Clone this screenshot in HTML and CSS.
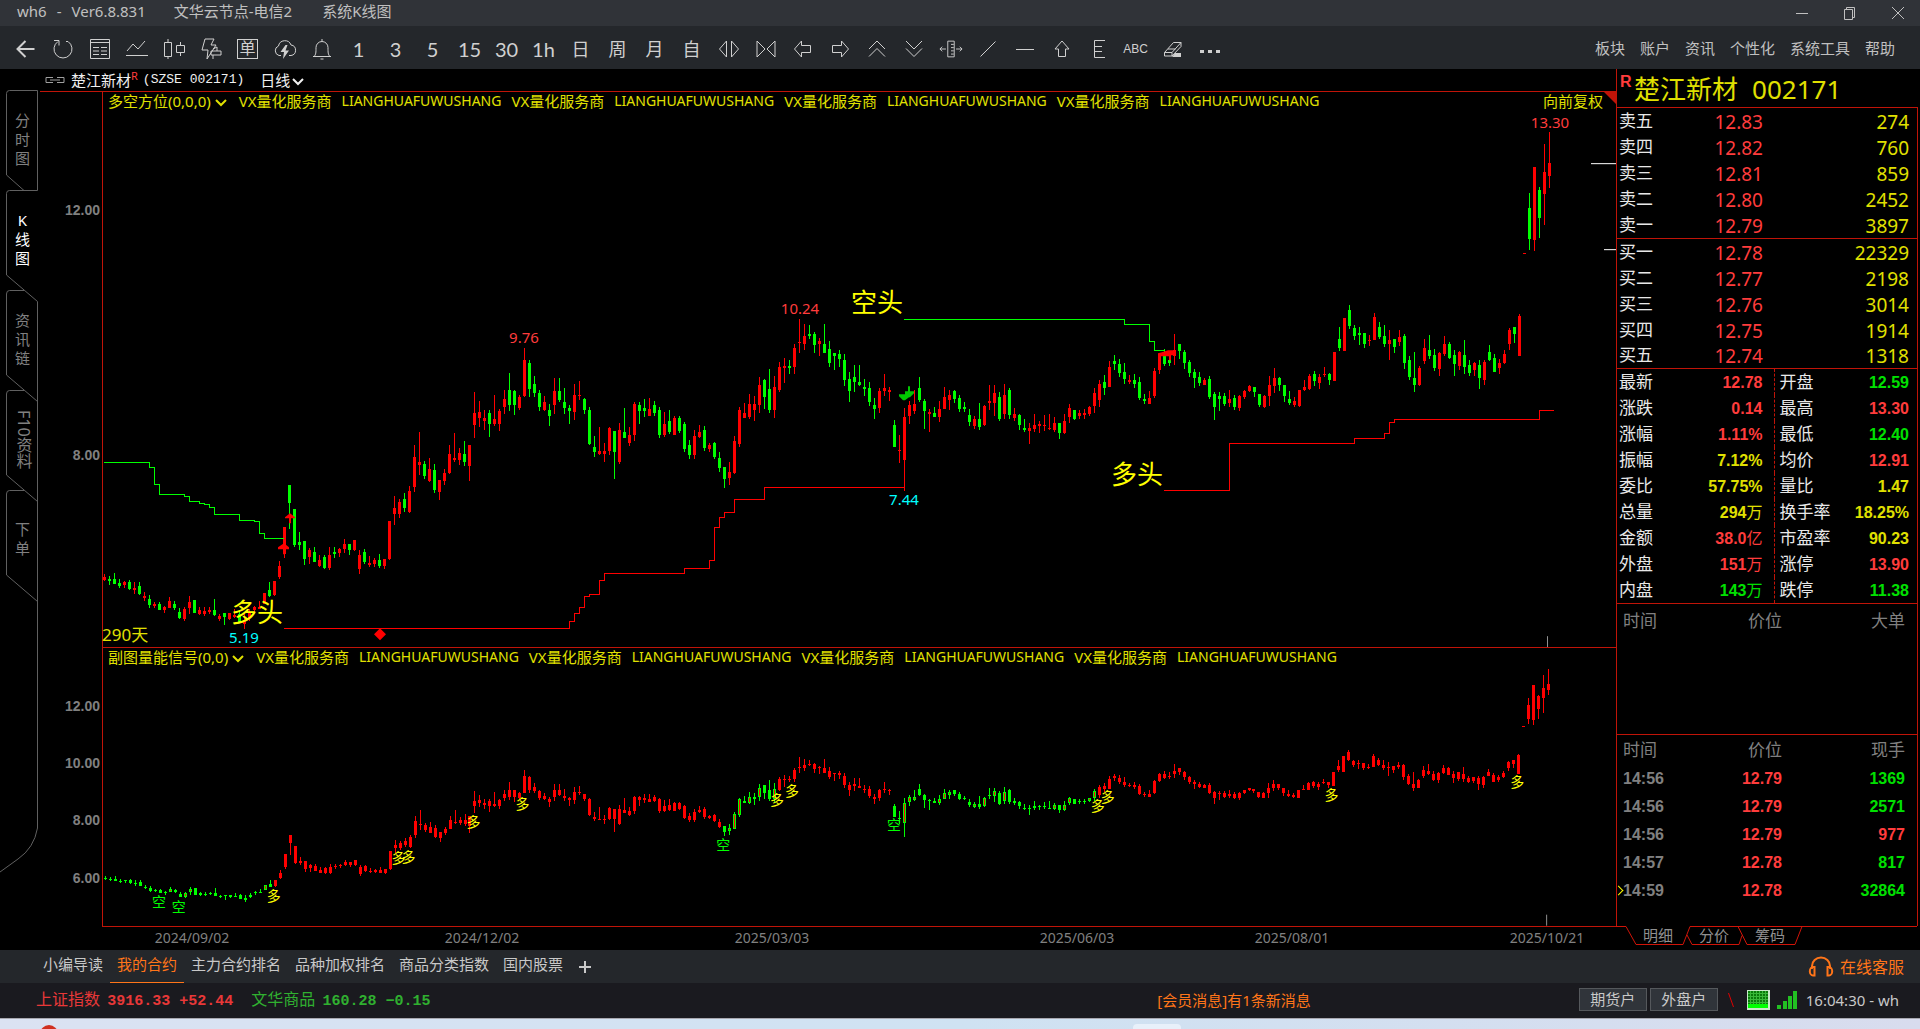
FILE: index.html
```html
<!DOCTYPE html>
<html lang="zh-CN">
<head>
  <meta charset="UTF-8">
  <meta name="viewport" content="width=device-width, initial-scale=1.0">
  <title>系统K线图</title>
  <link rel="stylesheet" href="styles.css">
</head>
<body>
  <header class="titlebar">
    <span>wh6</span>
    <span>-</span>
    <span>Ver6.8.831</span>
    <span class="node">文华云节点-电信2</span>
    <span>系统K线图</span>
    <div class="window-buttons">
      <button aria-label="最小化"><svg viewBox="0 0 14 14"><path d="M1 7.500h12"/></svg></button>
      <button aria-label="还原"><svg viewBox="0 0 14 14"><path d="M1.500 3.500h8v10h-8zM3.500 3.500v-2h8v10h-2"/></svg></button>
      <button aria-label="关闭"><svg viewBox="0 0 14 14"><path d="M1 1l12 12M13 1L1 13"/></svg></button>
    </div>
  </header>

  <nav class="toolbar">
    <button aria-label="返回"><svg viewBox="0 0 24 24"><path class="thick" d="M20.500 12H4M11.500 4L3.500 12l8 8"/></svg></button>
    <button aria-label="刷新"><svg viewBox="0 0 24 24"><path d="M7 4.500A9 9 0 1 0 17 4.500M3 3.500h5v5M17 4.500h-2"/></svg></button>
    <button aria-label="报价"><svg viewBox="0 0 24 24"><path d="M2.500 2.500h19v19h-19zM2.500 5.500h19M5 10.500h6M13 10.500h6M5 14h6M13 14h6M5 17.500h6M13 17.500h6"/></svg></button>
    <button aria-label="分时"><svg viewBox="0 0 24 24"><path d="M2 14l6-7 5 5 7-8M1 18.500h22"/></svg></button>
    <button aria-label="K线"><svg viewBox="0 0 24 24"><path d="M2.500 5.500h7v14h-7zM6 2v3.500M6 19.500V22M14.500 8.500h8v7h-8zM18.500 5v3.500M18.500 15.500V19"/></svg></button>
    <button aria-label="闪电下单"><svg viewBox="0 0 24 24"><path d="M6 2h9l-3 6h5L8 22l1-9H3zM12 14h10v4H12zM14 12l4-2v4M14 22v-4"/></svg></button>
    <button aria-label="下单" class="boxed"><span>单</span></button>
    <button aria-label="云端"><svg viewBox="0 0 24 24"><path d="M8 18.500H6a5 5 0 0 1-.5-9.500 6.500 6.500 0 0 1 12.500-1 5.300 5.300 0 0 1 0 10.500h-2"/><path class="solid" d="M12.500 8l-5 7h3.500l-1 7 6-8.500h-3.500l2-5.500z"/></svg></button>
    <button aria-label="预警"><svg viewBox="0 0 24 24"><path d="M4 19.500c2-2 2-4 2-9a6 6 0 0 1 12 0c0 5 0 7 2 9M3 19.500h18M12 2v2.500M10.500 22h3"/></svg></button>
    <button class="num">1</button>
    <button class="num">3</button>
    <button class="num">5</button>
    <button class="num">15</button>
    <button class="num">30</button>
    <button class="num">1h</button>
    <button class="period">日</button>
    <button class="period">周</button>
    <button class="period">月</button>
    <button class="period">自</button>
    <button aria-label="放宽"><svg viewBox="0 0 24 24"><path d="M9.500 4v16L2.500 12zM14.500 4v16l7-8z"/></svg></button>
    <button aria-label="收窄"><svg viewBox="0 0 24 24"><path d="M3 4v16l8-8zM21 4v16l-8-8z"/></svg></button>
    <button aria-label="左移"><svg viewBox="0 0 24 24"><path d="M10.500 4L3.500 12l7 8v-4.500h9v-7h-9z"/></svg></button>
    <button aria-label="右移"><svg viewBox="0 0 24 24"><path d="M13.500 4l7 8-7 8v-4.500h-9v-7h9z"/></svg></button>
    <button aria-label="上翻"><svg viewBox="0 0 24 24"><path d="M4 12l8-8 8 8M4 19.500l8-8 8 8"/></svg></button>
    <button aria-label="下翻"><svg viewBox="0 0 24 24"><path d="M4 4l8 8 8-8M4 11.500l8 8 8-8"/></svg></button>
    <button aria-label="刻度"><svg viewBox="0 0 26 24"><path d="M9.500 3.500h7v17h-7zM13 7h3M13 10.500h3M13 14h3M13 17.500h3M7.500 12H1M3.500 9.500L1 12l2.500 2.500M18.500 12H25M22.500 9.500L25 12l-2.500 2.500"/></svg></button>
    <button aria-label="斜线"><svg viewBox="0 0 24 24"><path d="M4.500 19.500L19.500 4.500"/></svg></button>
    <button aria-label="水平线"><svg viewBox="0 0 24 24"><path d="M3 12.500h18"/></svg></button>
    <button aria-label="箭头"><svg viewBox="0 0 24 24"><path d="M12 4l7 8h-3.500v7.500h-7V12H5z"/></svg></button>
    <button aria-label="黄金分割"><svg viewBox="0 0 24 24"><path d="M18 3.500H7.500v17H18M7.500 9.500H15M7.500 14.500H15"/></svg></button>
    <button class="abc">ABC</button>
    <button aria-label="擦除"><svg viewBox="0 0 24 24"><path d="M3.500 15.500l9-10h7.500l-9 10zM3.500 15.500v3.500h7.500v-3.500M11 19l9-9.500v-4M7 12h7.500"/><path class="solid" d="M14 16h6v4h-9z"/></svg></button>
    <button aria-label="更多"><svg viewBox="0 0 24 24"><path class="solid" d="M2 13h4v3H2zM10 13h4v3h-4zM18 13h4v3h-4z"/></svg></button>
    <div class="menu">
      <a href="#">板块</a>
      <a href="#">账户</a>
      <a href="#">资讯</a>
      <a href="#">个性化</a>
      <a href="#">系统工具</a>
      <a href="#">帮助</a>
    </div>
  </nav>

  <main class="workspace">
    <nav class="side">
      <svg class="side-lines" width="40" height="810" viewBox="0 69 40 810">
        <path d="M37.500 190.500V90.500H9.500Q6.500 90.500 6.500 93.500V175L24 190.500"/>
        <path d="M37.500 190.500H9.500Q6.500 190.500 6.500 193.500V275L37.500 301.500"/>
        <path d="M24 290.500H9.500Q6.500 290.500 6.500 294V375L37.500 401.500"/>
        <path d="M24 390.500H9.500Q6.500 390.500 6.500 394V475L37.500 501.500"/>
        <path d="M24 490.500H9.500Q6.500 490.500 6.500 494V575L37.500 601.500"/>
        <path d="M37.500 301.500V828Q34 848 18 859L0 872"/>
      </svg>
      <button><span>分时图</span></button>
      <button class="active"><span>K线图</span></button>
      <button><span>资讯链</span></button>
      <button><span class="turned">F10资料</span></button>
      <button><span>下单</span></button>
    </nav>

    <section class="charts">
      <div class="stock-bar">
        <svg width="20" height="8" viewBox="0 0 20 8"><path d="M8 1.500H1v5h7M12 1.500h7v5h-7M5 4h10"/></svg>
        <span class="name">楚江新材<sup>R</sup></span>
        <span class="code">(SZSE 002171)</span>
        <button class="cycle">日线<svg width="12" height="8" viewBox="0 0 12 8"><path d="M1 1l5 5 5-5"/></svg></button>
      </div>

      <div class="pane main-pane">
        <svg class="axis" viewBox="40 92 62 555">
          <text x="100" y="215">12.00</text>
          <text x="100" y="460">8.00</text>
        </svg>
        <div class="plot">
          <div class="plot-title">
            <button>多空方位(0,0,0)<svg width="12" height="8" viewBox="0 0 12 8"><path d="M1 1l5 5 5-5"/></svg></button>
            <span>VX量化服务商</span><span class="latin">LIANGHUAFUWUSHANG</span>
            <span>VX量化服务商</span><span class="latin">LIANGHUAFUWUSHANG</span>
            <span>VX量化服务商</span><span class="latin">LIANGHUAFUWUSHANG</span>
            <span>VX量化服务商</span><span class="latin">LIANGHUAFUWUSHANG</span>
            <a class="adjust" href="#">向前复权</a>
          </div>
          <svg class="graph" viewBox="103 112 1513 535">
            <g id="mainCandles" class="candles"></g>
            <g class="steps">
              <path class="short" d="M104 462H149V467H154V484H159V494H184V496H189V501H199V503H204V504H209V507H214V514H239V520H254V521H259V533H264V538H284"/>
              <path class="long" d="M284 628H569V621H574V613H579V607H584V596H589V594H599V580H604V573H684V568H709V560H714V527H719V517H724V512H734V499H764V487H904"/>
              <path class="short" d="M904 319H1124V324H1149V341H1154V350H1164"/>
              <path class="long" d="M1164 490H1229V443H1354V438H1384V433H1389V422H1394V419H1539V410H1554"/>
            </g>
            <path class="up-mark" d="M290 513l5 4v1h-4v5h-2v-5h-4v-1zM284 543l5 4v2h-4v5h-2v-5h-5v-2zM1162 352l6-2h8v5h-5v5h-2v-4h-11v-3zM380 628l6 6-6 6-6-6z"/>
            <path class="down-mark" d="M908 386h2v5h4v2l-4 4h-1l-4 3h-2l-4-4v-2h6v-3h3z"/>
            <g class="ticks">
              <path d="M1591 163.500h25M1604 249.500h12"/>
              <path class="dim" d="M1547.500 636v11"/>
            </g>
            <g class="prices">
              <text class="high" x="524" y="343">9.76</text>
              <text class="high" x="800" y="314">10.24</text>
              <text class="high" x="1550" y="128">13.30</text>
              <text class="low" x="244" y="643">5.19</text>
              <text class="low" x="904" y="505">7.44</text>
            </g>
            <g class="calls">
              <text x="231" y="622">多头</text>
              <text x="851" y="312">空头</text>
              <text x="1111" y="484">多头</text>
            </g>
            <text class="days" x="102" y="641">290天</text>
          </svg>
          <i class="corner"></i>
        </div>
      </div>

      <div class="pane sub-pane">
        <svg class="axis" viewBox="40 647 62 280">
          <text x="100" y="711">12.00</text>
          <text x="100" y="768">10.00</text>
          <text x="100" y="825">8.00</text>
          <text x="100" y="883">6.00</text>
        </svg>
        <div class="plot">
          <div class="plot-title">
            <button>副图量能信号(0,0)<svg width="12" height="8" viewBox="0 0 12 8"><path d="M1 1l5 5 5-5"/></svg></button>
            <span>VX量化服务商</span><span class="latin">LIANGHUAFUWUSHANG</span>
            <span>VX量化服务商</span><span class="latin">LIANGHUAFUWUSHANG</span>
            <span>VX量化服务商</span><span class="latin">LIANGHUAFUWUSHANG</span>
            <span>VX量化服务商</span><span class="latin">LIANGHUAFUWUSHANG</span>
          </div>
          <svg class="graph" viewBox="103 668 1513 258">
            <g id="subCandles" class="candles"></g>
            <g id="signals" class="signals"></g>
            <g class="ticks"><path class="dim" d="M1547.500 915v11"/></g>
          </svg>
        </div>
      </div>

      <svg class="dates" viewBox="40 927 1576 23">
        <text x="192" y="943">2024/09/02</text>
        <text x="482" y="943">2024/12/02</text>
        <text x="772" y="943">2025/03/03</text>
        <text x="1077" y="943">2025/06/03</text>
        <text x="1292" y="943">2025/08/01</text>
        <text x="1547" y="943">2025/10/21</text>
      </svg>
    </section>

    <aside class="quote">
      <h1><sup>R</sup><span>楚江新材</span><span>002171</span></h1>
      <div class="quote-body">
        <table class="orders">
          <tr><th>卖五</th><td>12.83</td><td>274</td></tr>
          <tr><th>卖四</th><td>12.82</td><td>760</td></tr>
          <tr><th>卖三</th><td>12.81</td><td>859</td></tr>
          <tr><th>卖二</th><td>12.80</td><td>2452</td></tr>
          <tr><th>卖一</th><td>12.79</td><td>3897</td></tr>
        </table>
        <table class="orders">
          <tr><th>买一</th><td>12.78</td><td>22329</td></tr>
          <tr><th>买二</th><td>12.77</td><td>2198</td></tr>
          <tr><th>买三</th><td>12.76</td><td>3014</td></tr>
          <tr><th>买四</th><td>12.75</td><td>1914</td></tr>
          <tr><th>买五</th><td>12.74</td><td>1318</td></tr>
        </table>
        <table class="stats">
          <tr><th>最新</th><td class="red">12.78</td><th>开盘</th><td class="green">12.59</td></tr>
          <tr><th>涨跌</th><td class="red">0.14</td><th>最高</th><td class="red">13.30</td></tr>
          <tr><th>涨幅</th><td class="red">1.11%</td><th>最低</th><td class="green">12.40</td></tr>
          <tr><th>振幅</th><td class="yellow">7.12%</td><th>均价</th><td class="red">12.91</td></tr>
          <tr><th>委比</th><td class="yellow">57.75%</td><th>量比</th><td class="yellow">1.47</td></tr>
          <tr><th>总量</th><td class="yellow">294<small>万</small></td><th>换手率</th><td class="yellow">18.25%</td></tr>
          <tr><th>金额</th><td class="red">38.0<small>亿</small></td><th>市盈率</th><td class="yellow">90.23</td></tr>
          <tr><th>外盘</th><td class="red">151<small>万</small></td><th>涨停</th><td class="red">13.90</td></tr>
          <tr><th>内盘</th><td class="green">143<small>万</small></td><th>跌停</th><td class="green">11.38</td></tr>
        </table>
        <div class="big-deals">
          <table class="deals">
            <tr><th>时间</th><th>价位</th><th>大单</th></tr>
          </table>
        </div>
        <div class="last-deals">
          <table class="deals">
            <tr><th>时间</th><th>价位</th><th>现手</th></tr>
            <tr><td>14:56</td><td class="red">12.79</td><td class="green">1369</td></tr>
            <tr><td>14:56</td><td class="red">12.79</td><td class="green">2571</td></tr>
            <tr><td>14:56</td><td class="red">12.79</td><td class="red">977</td></tr>
            <tr><td>14:57</td><td class="red">12.78</td><td class="green">817</td></tr>
            <tr class="current"><td>14:59</td><td class="red">12.78</td><td class="green">32864</td></tr>
          </table>
        </div>
      </div>
      <div class="quote-tabs">
        <svg width="302" height="20" viewBox="0 0 302 20">
          <path d="M0 .5H10L20 18.500H67L74 .5H301M71 9l5 9.500h47l3-9M122 .5l9 18h48l7-18"/>
        </svg>
        <button>明细</button>
        <button>分价</button>
        <button>筹码</button>
      </div>
    </aside>
  </main>

  <nav class="pages">
    <a href="#">小编导读</a>
    <a href="#" class="active">我的合约</a>
    <a href="#">主力合约排名</a>
    <a href="#">品种加权排名</a>
    <a href="#">商品分类指数</a>
    <a href="#">国内股票</a>
    <button aria-label="添加"><svg width="14" height="14" viewBox="0 0 14 14"><path d="M7 1v12M1 7h12"/></svg></button>
    <a href="#" class="service">
      <svg width="26" height="22" viewBox="0 0 26 22"><path d="M4 13V10a9 8.500 0 0 1 18 0v3M6.500 11v8.500H5a3 4 0 0 1 0-8.500zM19.500 11v8.500H21a3 4 0 0 0 0-8.500z"/></svg>
      在线客服
    </a>
  </nav>

  <footer class="status">
    <span class="index up">上证指数 <b>3916.33 +52.44</b></span>
    <span class="index down">文华商品 <b>160.28 −0.15</b></span>
    <a href="#" class="message">[会员消息]有1条新消息</a>
    <div class="status-right">
      <button>期货户</button>
      <button>外盘户</button>
      <svg class="slash" width="6" height="14" viewBox="0 0 6 14"><path d="M.5 0l5 14"/></svg>
      <svg class="meter" width="23" height="20" viewBox="0 0 23 20">
        <path fill="#c8e8c8" stroke="none" d="M0 0h23v20H0z"/>
        <path fill="#0a7a0a" stroke="none" d="M1 1h20v13H1z"/>
        <path stroke="#38b838" d="M1 3.500h20M1 6.500h20M1 9.500h20M1 12.500h20M3.500 1v13M6.500 1v13M9.500 1v13M12.500 1v13M15.500 1v13M18.500 1v13"/>
        <path fill="#00ff00" stroke="none" d="M1 14h20v4H1z"/>
      </svg>
      <svg class="signal" width="20" height="18" viewBox="0 0 20 18"><path fill="#22c022" d="M0 14h4v4H0zM5.500 10h4v8h-4zM11 5h4v13h-4zM16 0h4v18h-4z"/></svg>
      <span class="clock">16:04:30 - wh</span>
    </div>
  </footer>
  <div class="desktop"><i class="dot"></i><i class="pill"></i></div>

  <script src="chart.js"></script>
</body>
</html>
```
FILE: styles.css
```css
* {
  box-sizing: border-box;
}

body {
  margin: 0;
  height: 100vh;
  display: flex;
  flex-direction: column;
  overflow: hidden;
  background: #000;
  color: #c8c8c8;
  font-family: "Noto Sans", "Noto Sans CJK SC", sans-serif;
  font-size: 15px;
  line-height: 20px;
}

button {
  background: none;
  border: none;
  padding: 0;
  color: inherit;
  font: inherit;
  cursor: pointer;
}

a {
  color: inherit;
  text-decoration: none;
}

svg {
  fill: none;
  stroke: currentColor;
}

svg text {
  stroke: none;
}

table {
  border-collapse: collapse;
  table-layout: fixed;
  width: 100%;
}

th,
td {
  padding: 0;
  text-align: right;
}

.red { color: #ff3c3c; }
.green { color: #00e000; }
.yellow { color: #e0e000; }

/* title bar */
.titlebar {
  flex: none;
  height: 26px;
  display: flex;
  align-items: center;
  gap: 10px;
  padding: 0 14px 4px 17px;
  background: #303338;
  color: #c0c0c0;
}

.node {
  margin: 0 20px 0 18px;
}

.window-buttons {
  margin-left: auto;
  display: flex;
  gap: 32px;
}

.window-buttons button {
  width: 16px;
  height: 20px;
}

.window-buttons svg {
  width: 14px;
  height: 14px;
  display: block;
  margin: 4px auto 0;
}

/* toolbar */
.toolbar {
  flex: none;
  height: 43px;
  display: flex;
  align-items: center;
  padding: 2px 25px 0 7px;
  background: #24272b;
  color: #d0d0d0;
}

.toolbar button {
  width: 37px;
  height: 30px;
  display: flex;
  align-items: center;
  justify-content: center;
}

.toolbar svg {
  width: 24px;
  height: 24px;
}

.toolbar .thick {
  stroke-width: 2;
}

.toolbar .solid {
  fill: currentColor;
  stroke: none;
}

.toolbar .num {
  font-family: Lato, sans-serif;
  font-size: 20px;
}

.toolbar .period {
  font-size: 18px;
}

.toolbar .abc {
  font-family: "Liberation Sans", sans-serif;
  font-size: 12px;
}

.boxed span {
  width: 21px;
  height: 20px;
  border: 1px solid #d0d0d0;
  font-size: 16px;
  line-height: 17px;
}

.menu {
  margin-left: auto;
  display: flex;
  gap: 15px;
  padding-bottom: 2px;
  color: #c0c0c0;
}

/* workspace */
.workspace {
  flex: 1;
  min-height: 0;
  display: grid;
  grid-template-columns: 40px 1fr 304px;
}

.side {
  position: relative;
  padding-top: 20px;
  color: #808080;
}

.side-lines {
  position: absolute;
  left: 0;
  top: 0;
  color: #606060;
}

.side button {
  position: relative;
  display: flex;
  align-items: center;
  justify-content: center;
  width: 38px;
  height: 100px;
  padding-left: 7px;
}

.side span {
  width: 16px;
  line-height: 19px;
  word-break: break-all;
}

.side .turned {
  width: 20px;
  font-size: 16px;
  writing-mode: vertical-rl;
}

.side .active {
  color: #fff;
}

/* charts */
.charts {
  display: flex;
  flex-direction: column;
  min-width: 0;
}

.stock-bar {
  height: 22px;
  display: flex;
  align-items: center;
  padding-left: 5px;
  color: #f0f0f0;
}

.stock-bar > svg {
  color: #a0a0a0;
  margin-right: 6px;
}

.stock-bar sup {
  color: #ff3c3c;
  font-size: 11px;
  line-height: 0;
}

.stock-bar .code {
  font-family: "Liberation Mono", monospace;
  font-size: 13px;
  line-height: 24px;
  margin: 0 16px 0 5px;
}

.cycle svg {
  margin-left: 2px;
  stroke-width: 2;
}

.pane {
  display: grid;
  grid-template-columns: 62px 1fr;
  grid-template-rows: 100%;
  min-height: 0;
}

.main-pane {
  flex: 556 1 0;
  border-top: 1px solid #c01408;
}

.sub-pane {
  flex: 280 1 0;
}

.axis {
  width: 100%;
  height: 100%;
}

.axis text {
  fill: #808080;
  font: bold 14px "Liberation Sans", sans-serif;
  text-anchor: end;
}

.plot {
  position: relative;
  display: flex;
  flex-direction: column;
  min-width: 0;
  border-left: 1px solid #c01408;
}

.sub-pane .plot {
  border-top: 1px solid #c01408;
  border-bottom: 1px solid #c01408;
}

.plot-title {
  flex: none;
  height: 20px;
  display: flex;
  align-items: center;
  gap: 10px;
  padding: 0 13px 2px 5px;
  color: #e0e000;
  white-space: nowrap;
}

.plot-title svg {
  margin: 0 2px 0 4px;
  stroke-width: 2;
}

.latin {
  font-size: 14px;
}

.adjust {
  margin-left: auto;
}

.corner {
  position: absolute;
  top: 0;
  right: 0;
  border-top: 12px solid #c01408;
  border-left: 12px solid transparent;
}

.graph {
  flex: 1;
  width: 100%;
  min-height: 0;
  overflow: visible;
}

.candles rect {
  stroke: none;
  shape-rendering: crispEdges;
}

.candles .up { fill: #ff0000; }
.candles .down { fill: #00ff00; }

.steps path {
  shape-rendering: crispEdges;
}

.steps .short { stroke: #00ff00; }
.steps .long { stroke: #ff0000; }

.up-mark {
  fill: #ff0000;
  stroke: none;
}

.down-mark {
  fill: #00c800;
  stroke: none;
}

.ticks path { stroke: #fff; }
.ticks .dim { stroke: #909090; }

.prices text {
  font-size: 15px;
  text-anchor: middle;
}

.prices .high { fill: #ff3c3c; }
.prices .low { fill: #00ffff; }

.calls text {
  fill: #ffff00;
  font-size: 26px;
}

.days {
  fill: #e0e000;
  font-size: 17px;
}

.signals text {
  font-size: 14px;
  text-anchor: middle;
}

.signals .buy { fill: #ffff00; }
.signals .sell { fill: #00ff00; }

.dates {
  flex: none;
  width: 100%;
  height: 23px;
}

.dates text {
  fill: #808080;
  font-size: 14px;
  text-anchor: middle;
}

/* quote panel */
.quote {
  display: flex;
  flex-direction: column;
  padding-right: 2px;
}

.quote h1 {
  flex: none;
  display: flex;
  align-items: center;
  height: 38px;
  margin: 0;
  padding: 2px 0 0 3px;
  border-left: 1px solid #c01408;
  color: #e0e000;
  font-size: 26px;
  font-weight: normal;
}

.quote h1 span {
  margin-right: 14px;
}

.quote h1 sup {
  align-self: flex-start;
  width: 14px;
  color: #ff3c3c;
  font: bold 16px/22px "Liberation Sans", sans-serif;
}

.quote-body {
  flex: 1;
  min-height: 0;
  display: flex;
  flex-direction: column;
  border: 1px solid #c01408;
  border-bottom: none;
}

.quote-body th {
  color: #e8e8e8;
  font-size: 17px;
  font-weight: normal;
  text-align: left;
}

.orders,
.stats {
  flex: none;
}

.orders {
  border-bottom: 1px solid #c01408;
}

.orders tr,
.stats tr {
  height: 26px;
}

.orders th {
  width: 60px;
  padding-left: 2px;
}

.orders td {
  color: #e0e000;
  font-size: 19px;
  padding: 2px 8px 0 0;
}

.orders td:nth-child(2) {
  width: 86px;
  padding-right: 0;
  color: #ff3c3c;
}

.stats th {
  width: 60px;
  padding-left: 2px;
}

.stats td {
  font: bold 16px "Liberation Sans", "Noto Sans CJK SC", sans-serif;
  padding: 2px 8px 0 0;
}

.stats td:nth-child(2) {
  width: 97px;
  padding-right: 11px;
  border-right: 1px dashed #c01408;
}

.stats th:nth-child(3) {
  padding-left: 5px;
}

.stats small {
  font-size: 16px;
  font-weight: normal;
  line-height: 16px;
}

.big-deals {
  flex: 129 1 0;
  padding-top: 2px;
  border-top: 1px solid #c01408;
}

.last-deals {
  flex: 192 1 0;
  border-top: 1px solid #c01408;
}

.deals tr {
  height: 28px;
}

.deals tr:first-child {
  height: 30px;
}

.deals td {
  font: bold 16px "Liberation Sans", sans-serif;
}

.deals th {
  color: #808080;
}

.deals td:first-child {
  position: relative;
  color: #808080;
  text-align: left;
}

.deals th:first-child,
.deals td:first-child {
  width: 60px;
  padding-left: 6px;
}

.deals th:nth-child(2),
.deals td:nth-child(2) {
  width: 105px;
  text-align: right;
}

.deals th:last-child,
.deals td:last-child {
  padding-right: 12px;
  text-align: right;
}

.current td:first-child::before {
  content: "";
  position: absolute;
  left: -2px;
  top: 10px;
  width: 6px;
  height: 6px;
  border-top: 1px solid #ffff00;
  border-right: 1px solid #ffff00;
  transform: rotate(45deg);
}

.quote-tabs {
  position: relative;
  flex: none;
  height: 24px;
  display: flex;
  gap: 26px;
  padding-left: 27px;
  color: #909090;
}

.quote-tabs svg {
  position: absolute;
  left: 0;
  top: 0;
  color: #d01408;
}

.quote-tabs button {
  position: relative;
  height: 18px;
  line-height: 17px;
}

/* page tabs */
.pages {
  flex: none;
  height: 33px;
  display: flex;
  padding: 0 16px 0 36px;
  background: #24272b;
}

.pages a {
  padding: 4px 7px 0;
}

.pages .active {
  color: #ff7519;
  border-bottom: 1px solid #ff7519;
}

.pages button {
  margin-left: 8px;
  stroke-width: 2;
}

.pages button svg {
  display: block;
}

.pages .service {
  margin-left: auto;
  display: flex;
  align-items: center;
  gap: 6px;
  padding: 0;
  color: #ff7519;
  font-size: 16px;
}

.service svg {
  stroke-width: 2;
}

/* status bar */
.status {
  flex: none;
  height: 35px;
  display: flex;
  align-items: center;
  padding: 0 21px 2px 36px;
  background: #1a1a1f;
}

.index {
  margin-right: 18px;
  white-space: pre;
  font-size: 16px;
}

.index b {
  margin-left: 3px;
  font: bold 15px "Liberation Mono", monospace;
}

.index.up { color: #e83838; }
.index.down { color: #30b030; }

.message {
  margin: 0 268px 0 auto;
  color: #ff7519;
}

.status-right {
  display: flex;
  align-items: center;
}

.status-right button {
  width: 68px;
  height: 23px;
  margin-right: 3px;
  background: #30343a;
  border: 1px solid #55585c;
  line-height: 19px;
}

.slash {
  margin: 0 13px 0 7px;
  color: #e00000;
}

.meter {
  margin-right: 7px;
}

.meter path,
.signal path {
  shape-rendering: crispEdges;
}

.signal {
  margin-right: 9px;
  stroke: none;
}

.desktop {
  position: relative;
  flex: none;
  height: 11px;
  overflow: hidden;
  background: linear-gradient(90deg, #dbe2f2, #cfe2f2 50%, #d8dcee);
  border-top: 1px solid #a8a8b0;
}

.dot {
  position: absolute;
  left: 40px;
  top: 6px;
  width: 18px;
  height: 18px;
  border-radius: 50%;
  background: #d03020;
}

.pill {
  position: absolute;
  left: 59%;
  top: 5px;
  width: 48px;
  height: 20px;
  border-radius: 4px;
  background: #e8f0fa;
}
```
FILE: chart.js
```js
// one bar per entry: r(ise) or g(fall), then high, body top, body bottom, low
const bars = `
r574,577,580,581 g576,579,581,585 g573,579,584,584 g579,583,586,588 r581,582,585,588
g580,582,589,590 r582,588,590,594 g582,586,594,595 r592,596,598,601 g595,599,605,608
r602,604,606,608 g602,604,610,610 r606,607,610,613 r597,601,608,608 g601,604,608,610
g608,612,618,619 r607,609,619,621 r596,602,608,614 g600,600,613,613 r607,610,614,615
r607,611,614,616 r607,610,612,614 g599,610,615,616 r614,616,619,621 g613,613,617,625
r613,613,619,620 r609,615,617,618 g611,614,622,623 r613,620,624,629 r609,613,618,621
r606,607,610,614 r601,607,609,609 r593,593,604,604 g582,590,596,597 r581,581,595,596
r561,566,577,579 r527,527,554,558 g485,485,503,529 g509,509,545,547 g532,542,545,550
g541,541,559,565 r548,550,557,564 g547,552,562,562 r555,560,566,567 g555,557,568,569
r547,555,568,570 g547,552,554,558 r548,549,553,557 r539,544,549,553 g544,544,550,555
r540,540,550,551 r550,555,569,574 g549,552,562,564 r556,563,565,567 r558,560,564,567
g554,560,566,568 r559,559,566,569 r521,521,559,560 r496,508,514,525 r499,502,514,518
g493,499,508,512 r486,491,512,513 r445,457,487,492 r432,462,465,475 g461,464,476,479
r458,469,481,482 g464,470,490,493 r480,480,492,500 r469,473,481,485 r445,454,473,474
r433,458,460,462 r448,453,460,465 g441,454,462,466 r445,445,466,481 r392,413,425,438
r401,412,418,427 r410,418,421,430 g410,413,424,437 r395,419,424,426 r409,411,424,431
r390,399,407,414 g373,390,405,411 g390,391,405,415 r395,397,408,410 r348,360,396,397
g360,363,389,397 g376,384,393,397 g390,393,407,411 r396,402,410,411 g404,410,416,426
r378,391,405,414 g378,391,400,402 g388,402,408,414 g405,408,411,424 r384,395,412,420
r381,395,396,400 g398,399,410,414 g407,410,444,445 g436,447,452,457 r427,451,454,455
r443,451,454,462 r427,428,451,455 g431,431,452,479 r423,430,462,464 g408,432,438,438
r427,435,443,446 r402,404,435,441 g402,405,411,424 g399,408,411,417 r398,409,416,416
g401,405,413,416 g407,410,435,438 r412,424,435,437 g410,421,432,434 r416,418,435,435
g416,418,431,433 g422,424,449,452 g440,445,455,459 r430,436,455,459 r425,432,437,438
g426,430,448,451 r443,445,449,452 g442,443,457,459 g452,458,468,472 g467,467,479,488
r462,472,478,485 r436,441,473,474 r407,410,444,447 r403,413,418,418 r394,404,417,419
r396,404,410,421 r377,385,405,413 g379,380,397,409 g369,389,410,413 r376,387,410,418
r362,367,390,392 r358,366,368,383 g360,366,368,374 r344,348,367,374 r319,342,343,353
r324,336,344,350 g325,334,336,339 g332,334,345,353 r338,341,344,356 g324,344,353,353
g341,349,363,367 g353,353,356,370 g350,354,359,367 g354,360,380,386 g372,379,391,402
g365,377,382,392 g365,382,385,386 g379,387,389,396 g382,388,402,406 g398,405,409,419
r388,391,408,413 r374,388,391,396 r387,390,392,401 g420,425,447,447 r435,450,451,463
r408,417,460,491 r401,405,416,424 r390,404,411,414 g377,388,400,402 g399,401,411,429
r409,412,414,432 g407,413,417,417 r401,409,417,422 r387,397,409,409 r390,395,400,410
g390,391,399,403 g395,398,409,412 g402,407,409,412 g409,415,422,426 r416,419,426,429
g403,419,427,430 r405,406,425,426 r385,401,403,410 r385,393,403,416 g392,397,419,421
r384,395,414,419 g388,390,415,419 r408,414,418,421 g414,415,425,430 g419,428,430,432
r423,428,431,444 r414,425,429,432 r421,424,426,433 r415,425,426,431 r414,428,429,430
r417,423,430,432 g423,423,433,439 r414,421,433,434 r404,408,417,423 g410,410,419,420
r410,413,416,419 r409,413,415,419 r406,407,414,416 r388,393,406,413 r380,384,400,407
g375,382,388,395 r361,367,387,387 g355,361,364,370 g359,364,373,377 g363,372,379,384
r375,380,382,384 g374,380,384,388 g377,382,398,400 g394,399,401,404 r391,398,404,404
r368,371,396,398 r353,355,370,374 g349,356,364,366 g351,360,363,366 r334,350,356,365
g344,344,351,359 g350,352,363,369 g360,362,373,377 g369,372,378,388 g372,377,383,386
r378,380,385,385 g376,379,397,399 g392,394,407,420 g392,396,399,411 g393,396,404,406
r390,399,403,407 g395,398,407,410 r395,396,408,411 r390,391,397,399 r385,386,391,392
g387,387,392,397 g394,394,405,407 r395,396,407,408 r376,385,396,406 r368,378,386,393
g377,378,385,391 g385,385,396,402 g391,399,403,405 r397,401,405,407 r390,390,406,407
r380,387,390,391 r374,376,389,390 g371,374,381,386 r374,377,383,389 r367,374,375,377
g373,374,380,385 r352,352,381,381 g327,339,348,351 r318,318,351,351 g305,310,326,329
g325,328,336,340 g327,333,335,345 g333,333,344,348 r335,340,341,346 r313,317,340,340
g322,327,337,339 g325,336,344,347 r330,340,344,360 g339,339,347,353 r330,337,342,346
g334,336,363,369 g356,360,377,380 g352,378,385,392 r366,368,385,386 r339,348,361,364
g335,350,356,359 g349,355,368,371 r352,353,369,376 r336,344,354,356 g342,344,358,359
g350,355,364,376 r351,352,366,370 g340,355,367,374 g360,365,373,376 r362,363,370,376
g360,365,378,389 r360,362,380,385 g345,352,360,361 g354,358,372,372 r359,363,368,374
r350,354,363,364 r328,330,344,350 g327,327,334,343 r314,316,356,356 r253,253,254,254
g193,208,239,250 r167,167,240,251 g187,190,218,238 r144,172,194,225 r132,163,176,188
`.trim().split(/\s+/).map(s => ({ rise: s[0] === 'r', y: s.slice(1).split(',').map(Number) }));

const SVG = 'http://www.w3.org/2000/svg';
const mainCandles = document.getElementById('mainCandles');
const subCandles = document.getElementById('subCandles');
const signals = document.getElementById('signals');

function addRect(parent, x, top, width, bottom, cls) {
  const rect = document.createElementNS(SVG, 'rect');
  rect.setAttribute('x', x);
  rect.setAttribute('y', top);
  rect.setAttribute('width', width);
  rect.setAttribute('height', Math.max(1, bottom - top));
  rect.setAttribute('class', cls);
  parent.appendChild(rect);
}

function addCandle(parent, x, y, cls) {
  addRect(parent, x, y[0], 1, y[3], cls);
  addRect(parent, x - 1, y[1], 3, y[2], cls);
}

// the lower pane has the same prices on a smaller scale
function toSub(y) {
  return Math.round(669 + (y - 132) * 0.469);
}

// bars in these ranges are in a falling phase
function isShort(i) {
  return i < 34 || (i >= 124 && i < 135) || (i >= 158 && i < 199);
}

bars.forEach((bar, i) => {
  const x = 104 + i * 5;
  addCandle(mainCandles, x, bar.y, bar.rise ? 'up' : 'down');

  const y = bar.y.map(toSub);
  addCandle(subCandles, x, y, isShort(i) ? 'down' : 'up');
  if (isShort(i) && bar.rise && y[2] - y[1] > 2) {
    addRect(subCandles, x, y[1] + 1, 1, y[2] - 1, 'up');
  }
});

const marks = [
  ['空', 158, 902], ['空', 178, 907], ['多', 273, 896], ['多', 398, 858],
  ['多', 408, 857], ['多', 473, 822], ['多', 522, 804], ['空', 723, 845],
  ['多', 777, 800], ['多', 792, 791], ['空', 894, 825], ['多', 1098, 806],
  ['多', 1108, 797], ['多', 1332, 795], ['多', 1518, 782]
];

marks.forEach(([label, x, y]) => {
  const text = document.createElementNS(SVG, 'text');
  text.setAttribute('x', x);
  text.setAttribute('y', y + 5);
  text.setAttribute('class', label === '多' ? 'buy' : 'sell');
  text.textContent = label;
  signals.appendChild(text);
});
```
